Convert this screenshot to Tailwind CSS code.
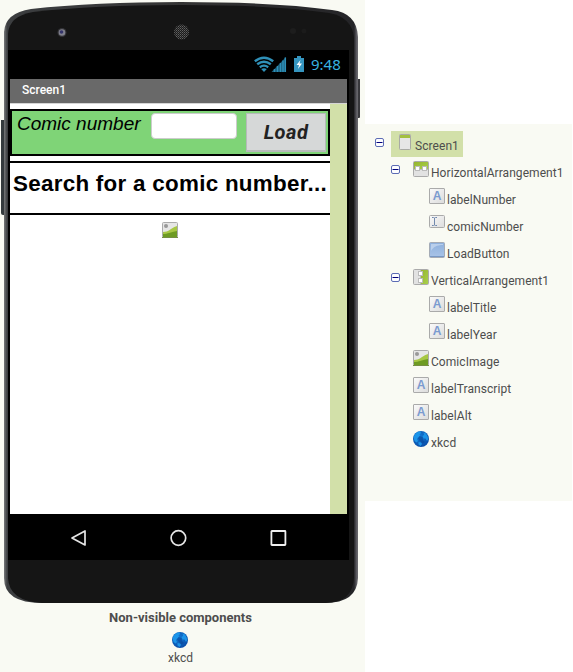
<!DOCTYPE html>
<html lang="en">
<head>
<meta charset="utf-8">
<title>Designer</title>
<script src="https://cdn.jsdelivr.net/npm/@tailwindcss/browser@4"></script>
</head>
<body class="bg-white font-['Roboto',sans-serif] text-[#4d4d4d]">
<svg class="absolute size-0" aria-hidden="true">
  <defs>
    <linearGradient id="tile" x1="0" y1="0" x2="1" y2="1"><stop offset="0" stop-color="#fafafa"/><stop offset="1" stop-color="#dcdcdc"/></linearGradient>
    <linearGradient id="blue" x1="0" y1="0" x2="0" y2="1"><stop offset="0" stop-color="#8dafdc"/><stop offset="1" stop-color="#a9c4e8"/></linearGradient>
    <linearGradient id="lime" x1="0" y1="0" x2="1" y2="1"><stop offset="0" stop-color="#95b52e"/><stop offset="1" stop-color="#a9d04c"/></linearGradient>
    <radialGradient id="sea" cx=".4" cy=".35" r=".7"><stop offset="0" stop-color="#127bd8"/><stop offset="1" stop-color="#0a4ba5"/></radialGradient>
    <pattern id="mesh" width="2" height="2" patternUnits="userSpaceOnUse"><rect width="2" height="2" fill="#1b1b1b"/><rect width="1" height="1" fill="#626262"/><rect x="1" y="1" width="1" height="1" fill="#454545"/></pattern>
    <linearGradient id="rim" x1="4" x2="359" y1="0" y2="0" gradientUnits="userSpaceOnUse"><stop offset="0" stop-color="#77797a"/><stop offset=".009" stop-color="#3c3e40"/><stop offset=".5" stop-color="#343434"/><stop offset=".986" stop-color="#242427"/><stop offset=".993" stop-color="#5b5a60"/><stop offset="1" stop-color="#76777a"/></linearGradient>
  </defs>
  <symbol id="i-screen" viewBox="0 0 16 16"><rect x="2.5" y=".5" width="11" height="15" rx=".8" fill="#e6e6e6" stroke="#a9aaa5"/><path d="M3 1h10v3H3z" fill="#a3c040"/></symbol>
  <symbol id="i-horizontal" viewBox="0 0 16 16"><rect x=".5" y=".5" width="15" height="15" rx="1" fill="#e2e2e2" stroke="#aaa"/><path d="M1 1h14v7H1z" fill="url(#lime)"/><path d="M1 8.500h14" stroke="#bbb"/><rect x="2.500" y="5.500" width="4" height="4" fill="#fff" stroke="#bbb"/><rect x="9.500" y="5.500" width="4" height="4" fill="#fff" stroke="#bbb"/></symbol>
  <symbol id="i-vertical" viewBox="0 0 16 16"><rect x=".5" y=".5" width="15" height="15" rx="1" fill="#e2e2e2" stroke="#aaa"/><path d="M8 1h7v14H8z" fill="url(#lime)"/><path d="M7.500 1v14" stroke="#bbb"/><rect x="5.500" y="2.500" width="4" height="4" fill="#fff" stroke="#bbb"/><rect x="5.500" y="9.500" width="4" height="4" fill="#fff" stroke="#bbb"/></symbol>
  <symbol id="i-textbox" viewBox="0 0 16 16"><rect x=".5" y=".5" width="15" height="12" rx="1" fill="url(#tile)" stroke="#aaa"/><path d="M3 2.500h1.500l1 .5 1-.5H8M5.500 3v7M3 10.500h1.500l1-.5 1 .5H8" fill="none" stroke="#7189ad"/></symbol>
  <symbol id="i-button" viewBox="0 0 16 16"><rect x=".5" y=".5" width="15" height="15" rx="1" fill="url(#blue)" stroke="#a5abb5"/><path d="M2 2h12v1C8 3 4 5 2 9z" fill="#d0dff2" opacity=".65"/><path d="M1 14.500h14" stroke="#7898c5"/></symbol>
  <symbol id="i-image" viewBox="0 0 16 16"><rect x=".5" y=".5" width="15" height="15" rx="1" fill="#e6e6e6" stroke="#aaa"/><circle cx="4" cy="4" r="2" fill="#999"/><path d="M1 10c6 0 6-3 14-6v11H1z" fill="#a7c744"/><path d="M1 12c5 0 7-2 14-3v6H1z" fill="#6e9b23"/><path d="M0 15.500h16" stroke="#758e43"/></symbol>
  <symbol id="i-globe" viewBox="0 0 16 16"><circle cx="8" cy="8" r="8" fill="url(#sea)"/><path d="M1.500 4C3 1.500 5 .5 7.500.5L8 2 6.500 3.500 7 5 5 6.500 4 8l1 2-1.500 1.500C.5 10 .5 6 1.500 4zM10.500 1.500l2 .5 2 3 .8 3-1.300 2-1.500-2.500-2 0-1-2.500 1.500-1zM5.500 11l2.500.5 1 1.500-1.500 2-2-1.500z" fill="#1f9cee" opacity=".85"/><path d="M6.500 5l3 1 .5 3 2 2-2.500 1.500-3-3-1.500-2z" fill="#0a4496" opacity=".6"/></symbol>
  <symbol id="i-minus" viewBox="0 0 9 9"><rect x=".5" y=".5" width="8" height="8" rx="1.500" fill="#fdfdff" stroke="#5c6bb4"/><path d="M1.500 4.500h6" stroke="#00007b"/></symbol>
</svg>

<main class="flex h-[672px] w-[573px] items-start overflow-hidden">
  <section class="flex h-[672px] w-[365px] shrink-0 flex-col bg-[#f9faf3]">
    <div class="relative h-[603px] shrink-0 pl-2">
      <svg class="absolute top-0 left-0" width="365" height="603" viewBox="0 0 365 603">
        <path d="M1 120h4v95H3q-2 0-2-2z" fill="#353b3e"/>
        <path d="M356 79h4v38q0 1-1 1h-3z" fill="#39393d"/>
        <path d="M4 585V32Q5 13 31 9Q95 2 181 2Q275 2 332 10Q357 13 358 37V578Q357 603 325 603H42Q4 603 4 578z" fill="url(#rim)"/>
        <path d="M8 578V34Q9 16 33 12Q95 5 181 5Q275 5 329 13Q352 17 354 38V577Q353 603 325 603H42Q9 601 8 578z" fill="#151515"/>
        <circle cx="62" cy="32.500" r="4.500" fill="#343438"/><circle cx="62" cy="32.500" r="3.300" fill="#80808c"/><circle cx="61.500" cy="32" r="1.800" fill="#34346a"/>
        <circle cx="181.500" cy="32" r="7.500" fill="url(#mesh)"/>
        <circle cx="293" cy="31" r="3" fill="#1d1d1d"/><circle cx="304" cy="31" r="2.500" fill="#1b1b1b"/>
      </svg>
      <div class="relative flex h-[603px] w-[341px] flex-col pt-[50px]">
        <div class="flex h-[29px] items-center bg-black pl-[246px]">
          <svg width="64" height="18" viewBox="0 0 64 18" fill="none" stroke="#2f90b8">
            <path d="M.8 5.300Q10-2 19.200 5.300" stroke-width="2.400"/><path d="M3.200 8.300Q10 3 16.800 8.300" stroke-width="2.400"/><path d="M5.800 11.200Q10 8.200 14.200 11.200" stroke-width="2.300"/><path d="M7.200 13Q10 11.300 12.800 13L10 16z" fill="#2f90b8" stroke="none"/>
            <path d="M17.500 16L32 1v15z" fill="#1b5c78" stroke="none"/>
            <path d="M20.500 16v-3M23.500 16v-6M26.500 16V7M29 16V4.500M31.300 16V1.500" stroke-width="1.500"/>
            <path d="M40 2h3V0h4v2h3v14H40z" fill="#3595bf" stroke="none"/><path d="M46.500 4l-4 5h2.500l-1 4 4-5.500h-2.500z" fill="#fff" stroke="none"/>
          </svg>
          <span class="-ml-[7px] whitespace-nowrap font-['Noto_Sans'] text-[15px] leading-none text-[#38b3e1]">9:48</span>
        </div>
        <div class="flex h-[435px] flex-col border-x-2 border-black bg-white">
          <div class="flex h-[25px] items-center border-b border-[#d5d5d5] bg-[#696969] pb-[2px] pl-3 text-[12px] font-medium text-white">Screen1</div>
          <div class="flex flex-1 bg-[#d2e0a9]">
            <div class="flex w-[320px] flex-col bg-white pt-[5px] font-['Liberation_Sans',sans-serif] text-black">
              <div class="flex h-[47px] items-start border-2 border-black bg-[#7fd477]">
                <span class="w-[139px] whitespace-nowrap pl-[5px] text-[19px] leading-[25px] italic">Comic number</span>
                <span class="mt-[2px] h-[26px] w-[86px] rounded-[4px] border border-[#ccc] bg-white"></span>
                <span class="mt-[2px] ml-[9px] flex h-[39px] w-[80px] items-center justify-center border border-b-2 border-[#b7baba] bg-[#d6d8d8] font-['Roboto'] text-[20px] font-bold italic tracking-[0.5px] text-[#222]">Load</span>
              </div>
              <div class="mt-[5px] h-[54px] border-y-2 border-black pl-[3px]"><span class="whitespace-nowrap text-[22.400px] leading-[41px] font-bold tracking-[0.28px]">Search for a comic number...</span></div>
              <svg class="mx-auto mt-[7px]" width="16" height="16"><use href="#i-image"/></svg>
            </div>
          </div>
        </div>
        <div class="flex h-[46px] items-center justify-between bg-black pt-[2px] pr-[62px] pl-[62px]">
          <svg width="17" height="18" viewBox="0 0 17 18"><path d="M15 2v14L2 9z" fill="none" stroke="#e5e5e5" stroke-width="1.700" stroke-linejoin="round"/></svg>
          <svg width="18" height="18" viewBox="0 0 18 18"><circle cx="9.400" cy="9" r="7.300" fill="none" stroke="#e5e5e5" stroke-width="1.700"/></svg>
          <svg width="18" height="18" viewBox="0 0 18 18"><rect x="2.400" y="2" width="14" height="14" rx=".5" fill="none" stroke="#f0f0f0" stroke-width="1.800"/></svg>
        </div>
      </div>
    </div>
    <div class="flex flex-col items-center pr-1 pt-[7px]">
      <div class="text-[13px] leading-4 font-bold">Non-visible components</div>
      <svg class="mt-[6px] mr-[1px]" width="16" height="16"><use href="#i-globe"/></svg>
      <div class="mt-[2px] text-[12px] leading-4">xkcd</div>
    </div>
  </section>

  <section class="mt-[124px] h-[377px] w-[207px] bg-[#f9faf3] pt-[7px] text-[12px] leading-[14px] tracking-[0.06px] whitespace-nowrap">
    <div class="flex h-[27px] items-start pl-[10px]"><svg class="mt-[7px]" width="9" height="9"><use href="#i-minus"/></svg><div class="ml-[7px] flex h-[26px] w-[72px] bg-[#d2e0a9] pl-[6px] pt-[3px]"><svg width="16" height="16"><use href="#i-screen"/></svg><span class="mt-[5px] ml-[2px]">Screen1</span></div></div>
    <div class="flex h-[27px] items-start pt-[3px] pl-[26px]"><svg class="mt-1" width="9" height="9"><use href="#i-minus"/></svg><svg class="ml-[13px]" width="16" height="16"><use href="#i-horizontal"/></svg><span class="mt-[5px] ml-[2px]">HorizontalArrangement1</span></div>
    <div class="flex h-[27px] items-start pt-[3px] pl-[64px]"><span class="flex size-4 items-center justify-center rounded-[1px] border border-[#aaa] bg-linear-to-br from-[#fafafa] to-[#dcdcdc] font-['Liberation_Sans'] text-[12px] font-bold text-[#7b9bd0]">A</span><span class="mt-[5px] ml-[2px]">labelNumber</span></div>
    <div class="flex h-[27px] items-start pt-[3px] pl-[64px]"><svg width="16" height="16"><use href="#i-textbox"/></svg><span class="mt-[5px] ml-[2px]">comicNumber</span></div>
    <div class="flex h-[27px] items-start pt-[3px] pl-[64px]"><svg width="16" height="16"><use href="#i-button"/></svg><span class="mt-[5px] ml-[2px]">LoadButton</span></div>
    <div class="flex h-[27px] items-start pt-[3px] pl-[26px]"><svg class="mt-1" width="9" height="9"><use href="#i-minus"/></svg><svg class="ml-[13px]" width="16" height="16"><use href="#i-vertical"/></svg><span class="mt-[5px] ml-[2px]">VerticalArrangement1</span></div>
    <div class="flex h-[27px] items-start pt-[3px] pl-[64px]"><span class="flex size-4 items-center justify-center rounded-[1px] border border-[#aaa] bg-linear-to-br from-[#fafafa] to-[#dcdcdc] font-['Liberation_Sans'] text-[12px] font-bold text-[#7b9bd0]">A</span><span class="mt-[5px] ml-[2px]">labelTitle</span></div>
    <div class="flex h-[27px] items-start pt-[3px] pl-[64px]"><span class="flex size-4 items-center justify-center rounded-[1px] border border-[#aaa] bg-linear-to-br from-[#fafafa] to-[#dcdcdc] font-['Liberation_Sans'] text-[12px] font-bold text-[#7b9bd0]">A</span><span class="mt-[5px] ml-[2px]">labelYear</span></div>
    <div class="flex h-[27px] items-start pt-[3px] pl-[48px]"><svg width="16" height="16"><use href="#i-image"/></svg><span class="mt-[5px] ml-[2px]">ComicImage</span></div>
    <div class="flex h-[27px] items-start pt-[3px] pl-[48px]"><span class="flex size-4 items-center justify-center rounded-[1px] border border-[#aaa] bg-linear-to-br from-[#fafafa] to-[#dcdcdc] font-['Liberation_Sans'] text-[12px] font-bold text-[#7b9bd0]">A</span><span class="mt-[5px] ml-[2px]">labelTranscript</span></div>
    <div class="flex h-[27px] items-start pt-[3px] pl-[48px]"><span class="flex size-4 items-center justify-center rounded-[1px] border border-[#aaa] bg-linear-to-br from-[#fafafa] to-[#dcdcdc] font-['Liberation_Sans'] text-[12px] font-bold text-[#7b9bd0]">A</span><span class="mt-[5px] ml-[2px]">labelAlt</span></div>
    <div class="flex h-[27px] items-start pt-[3px] pl-[48px]"><svg width="16" height="16"><use href="#i-globe"/></svg><span class="mt-[5px] ml-[2px]">xkcd</span></div>
  </section>
</main>
</body>
</html>
